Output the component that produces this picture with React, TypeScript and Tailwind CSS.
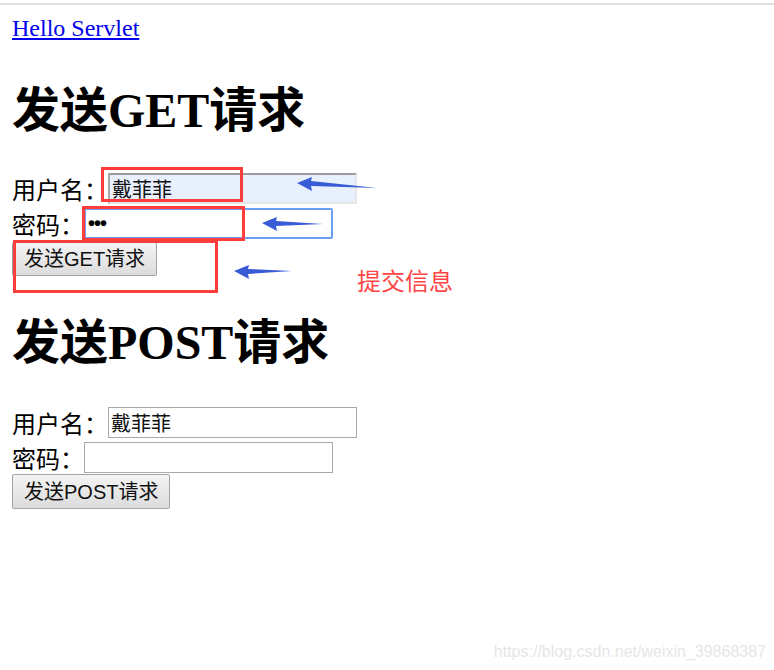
import React from "react"

const serif = "font-['Liberation_Serif','Noto_Sans_CJK_SC',serif]"
const cjk = "font-['Noto_Sans_CJK_SC','Liberation_Sans',sans-serif]"
const sans = "font-['Liberation_Sans','Noto_Sans_CJK_SC',sans-serif]"

function Arrow({ className, w, tailY }: { className: string; w: number; tailY: number }) {
  return (
    <svg className={className} width={w} height={17} viewBox={`0 0 ${w} 17`}>
      <polygon points={`0,7 15,1 14,5 ${w},${tailY} 14,10 15,15`} fill="#3a5bd6" />
    </svg>
  )
}

function Row({ label, children }: { label: string; children: React.ReactNode }) {
  return (
    <div className="flex items-center h-[31px]">
      <span className={`${cjk} text-[24px] leading-[31px] text-black`}>{label}</span>
      {children}
    </div>
  )
}

const field = `${cjk} w-[249px] h-[31px] px-[2px] text-[20px] leading-[27px] text-[#111] outline-none`

function Btn({ children, tall }: { children: React.ReactNode; tall?: boolean }) {
  return (
    <button
      className={`${sans} ${tall ? "h-[35px]" : "h-[34px]"} px-[11px] text-[20px] leading-[30px] text-[#111] border border-[#a3a3a3] rounded-[2px] bg-gradient-to-b from-[#f4f4f4] to-[#dcdcdc]`}
    >
      {children}
    </button>
  )
}

export default function App() {
  return (
    <div className="relative w-[774px] h-[670px] overflow-hidden bg-white">
      <div className="mt-[3px] h-[2px] bg-[#e0e0e0]" />

      <div className="px-[12px]">
        <div className="mt-[9px] h-[28px] leading-[28px]">
          <a href="#" className={`${serif} text-[24px] text-[#0000ee] underline`}>
            Hello Servlet
          </a>
        </div>

        <h1 className={`${serif} mt-[41px] h-[56px] text-[48px] leading-[56px] font-bold text-black`}>
          发送GET请求
        </h1>

        <form className="mt-[34px] flex flex-col items-start gap-[3px]">
          <Row label="用户名：">
            <input
              readOnly
              defaultValue="戴菲菲"
              className={`${field} border-2 border-t-[#9c9c9c] border-l-[#a8a8a8] border-r-[#e6e6e6] border-b-[#e6e6e6] bg-[#e8f0fe]`}
            />
          </Row>
          <div className="mt-[1px]">
            <Row label="密码：">
              <input
                readOnly
                defaultValue="•••"
                className={`${sans} w-[249px] h-[31px] px-[2px] text-[20px] font-bold leading-[27px] tracking-[-1px] text-black outline-none border-2 border-[#6a9ef2] rounded-[2px] bg-white`}
              />
            </Row>
          </div>
          <Btn>发送GET请求</Btn>
        </form>

        <h2 className={`${serif} mt-[39px] h-[56px] text-[48px] leading-[56px] font-bold text-black`}>
          发送POST请求
        </h2>

        <form className="mt-[36px] flex flex-col items-start gap-[1px]">
          <Row label="用户名：">
            <input readOnly defaultValue="戴菲菲" className={`${field} border border-[#a9a9a9] bg-white`} />
          </Row>
          <div className="mt-[3px]">
            <Row label="密码：">
              <input readOnly defaultValue="" className={`${field} border border-[#a9a9a9] bg-white`} />
            </Row>
          </div>
          <Btn tall>发送POST请求</Btn>
        </form>
      </div>

      {/* annotations drawn over the page */}
      <div className="absolute left-[101px] top-[167px] w-[142px] h-[35px] border-[3px] border-[#ff3d3d]" />
      <div className="absolute left-[82px] top-[206px] w-[163px] h-[35px] border-[3px] border-[#ff3d3d]" />
      <div className="absolute left-[13px] top-[240px] w-[205px] h-[53px] border-[3px] border-[#ff3d3d]" />

      <Arrow className="absolute left-[297px] top-[176px]" w={80} tailY={12} />
      <Arrow className="absolute left-[262px] top-[216px]" w={61} tailY={8} />
      <Arrow className="absolute left-[234px] top-[264px]" w={58} tailY={7} />

      <span className={`${cjk} absolute left-[357px] top-[264px] text-[24px] leading-[32px] text-[#ff4545]`}>
        提交信息
      </span>

      <span className={`${sans} absolute right-[8px] bottom-[8px] text-[16px] leading-[20px] text-[#e6e6e6]`}>
        https://blog.csdn.net/weixin_39868387
      </span>
    </div>
  )
}
